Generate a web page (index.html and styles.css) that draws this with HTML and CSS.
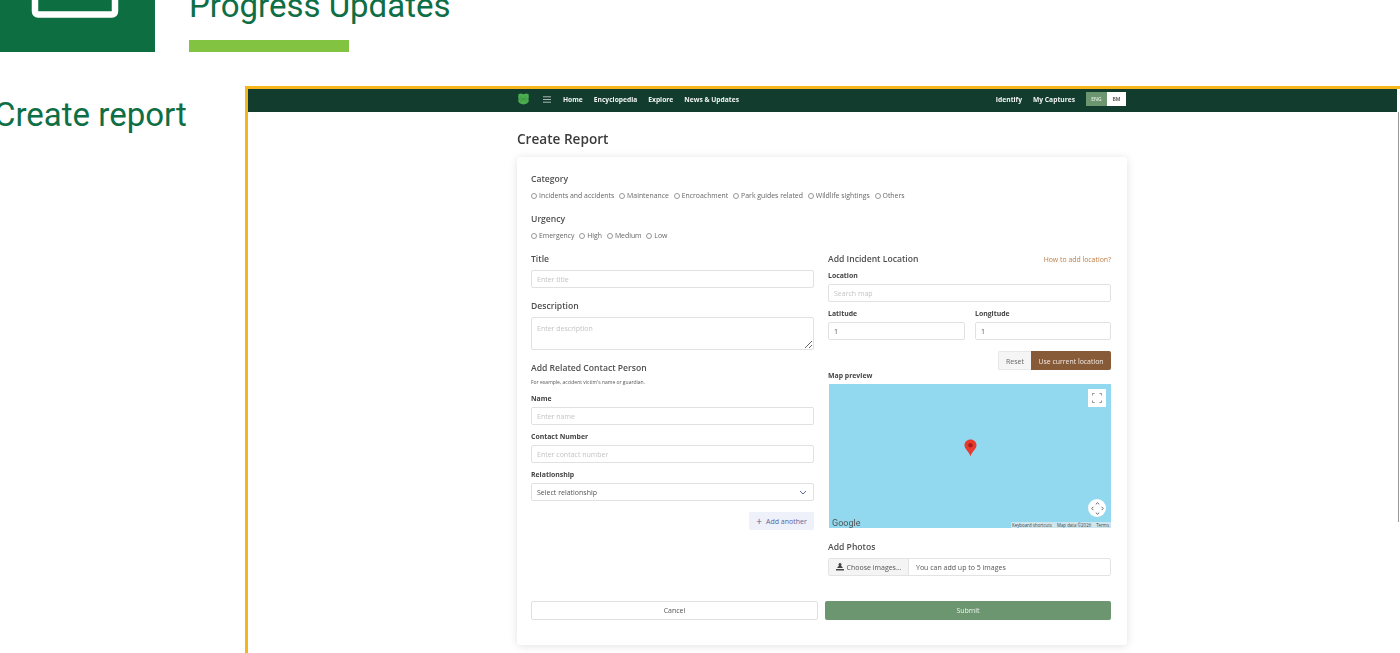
FILE: index.html
```html
<!DOCTYPE html>
<html lang="en">
<head>
<meta charset="utf-8">
<title>Progress Updates</title>
<link rel="stylesheet" href="styles.css">
</head>
<body>
<div class="slide">
  <header class="slide-head">
    <div class="slide-icon">
      <svg class="slide-icon-svg" width="155" height="52" viewBox="0 0 155 52"><rect x="35" y="-30" width="80" height="44.500" rx="3" fill="none" stroke="#fff" stroke-width="6.500"/></svg>
    </div>
    <div class="slide-title-block">
      <h1 class="slide-title">Progress Updates</h1>
      <div class="slide-bar"></div>
    </div>
  </header>
  <div class="slide-body">
    <h2 class="slide-sub">Create report</h2>
    <div class="frame">
      <div class="frame-scroll"></div>
      <div class="frame-inner">
      <nav class="nav">
        <div class="nav-inner">
          <div class="nav-left">
            <svg class="logo" width="11" height="12" viewBox="0 0 11 12"><path d="M.5 1 3 .5l2.500.8L8 .5l2.500.5.3 3-.3 2 .3 2.500L9 10.500l-3.500 1-3.500-1L.2 8.500.5 6 .2 4Z" fill="#4cae4f"/><path d="M2 3l6.500 6M8.500 2.500 2.500 9M1 6h9" stroke="#3a9444" stroke-width=".7"/></svg>
            <svg class="burger" width="8" height="7" viewBox="0 0 8 7"><path d="M0 .8h8M0 3.500h8M0 6.200h8" stroke="#cfd8d3" stroke-width=".8"/></svg>
            <a class="nav-link">Home</a><a class="nav-link">Encyclopedia</a><a class="nav-link">Explore</a><a class="nav-link">News &amp; Updates</a>
          </div>
          <div class="nav-right">
            <a class="nav-link">Identify</a><a class="nav-link">My Captures</a>
            <div class="lang"><span class="lang-on">ENG</span><span class="lang-off">BM</span></div>
          </div>
        </div>
      </nav>
      <main class="content">
        <h3 class="page-title">Create Report</h3>
        <form class="card">
          <div class="section-label">Category</div>
          <div class="radios">
            <label class="radio"><i class="dot"></i>Incidents and accidents</label>
            <label class="radio"><i class="dot"></i>Maintenance</label>
            <label class="radio"><i class="dot"></i>Encroachment</label>
            <label class="radio"><i class="dot"></i>Park guides related</label>
            <label class="radio"><i class="dot"></i>Wildlife sightings</label>
            <label class="radio"><i class="dot"></i>Others</label>
          </div>
          <div class="section-label mt12">Urgency</div>
          <div class="radios">
            <label class="radio"><i class="dot"></i>Emergency</label>
            <label class="radio"><i class="dot"></i>High</label>
            <label class="radio"><i class="dot"></i>Medium</label>
            <label class="radio"><i class="dot"></i>Low</label>
          </div>
          <div class="columns">
            <div class="col">
              <div class="section-label pt1 lb6">Title</div>
              <input class="field" placeholder="Enter title">
              <div class="section-label mt12 lb5">Description</div>
              <textarea class="field area" placeholder="Enter description"></textarea>
              <div class="section-label mt12">Add Related Contact Person</div>
              <div class="hint">For example, accident victim's name or guardian.</div>
              <div class="small-label mt7">Name</div>
              <input class="field" placeholder="Enter name">
              <div class="small-label mt6">Contact Number</div>
              <input class="field" placeholder="Enter contact number">
              <div class="small-label mt6">Relationship</div>
              <div class="field select">Select relationship
                <svg width="8" height="5" viewBox="0 0 8 5"><path d="M1 1l3 3 3-3" fill="none" stroke="#4a5590" stroke-width=".9"/></svg>
              </div>
              <div class="add-row">
                <button type="button" class="add-btn"><span class="plus">+</span>Add another</button>
              </div>
            </div>
            <div class="col">
              <div class="loc-head">
                <div class="section-label pt1">Add Incident Location</div>
                <a class="help">How to add location?</a>
              </div>
              <div class="small-label mt6">Location</div>
              <input class="field" placeholder="Search map">
              <div class="latlng">
                <div><div class="small-label">Latitude</div><input class="field" value="1"></div>
                <div><div class="small-label">Longitude</div><input class="field" value="1"></div>
              </div>
              <div class="loc-btns">
                <button type="button" class="btn-reset">Reset</button><button type="button" class="btn-use">Use current location</button>
              </div>
              <div class="small-label">Map preview</div>
              <div class="map">
                <div class="map-full"><svg width="10" height="10" viewBox="0 0 10 10"><path d="M.5 2.500v-2h2M7.500 .5h2v2M9.500 7.500v2h-2M2.500 9.500h-2v-2" fill="none" stroke="#777" stroke-width=".8"/></svg></div>
                <svg class="pin" width="13" height="18" viewBox="0 0 13 18"><path d="M6.500.5C3 .5.500 3 .500 6.200c0 4.300 4.700 6.200 6 11.300 1.300-5.100 6-7 6-11.300C12.500 3 10 .5 6.500.5Z" fill="#e8392f"/><circle cx="6.500" cy="6.200" r="2.200" fill="#a81c16"/></svg>
                <div class="map-move"><svg width="13" height="13" viewBox="0 0 13 13"><path d="M4.800 2.400 6.500.8l1.700 1.600M4.800 10.600l1.700 1.600 1.700-1.600M2.400 4.800.8 6.500l1.600 1.700M10.600 4.800l1.600 1.700-1.600 1.700" fill="none" stroke="#555" stroke-width=".9"/></svg></div>
                <span class="google">Google</span>
                <div class="attrib"><span>Keyboard shortcuts</span><span>Map data ©2026</span><span>Terms</span></div>
              </div>
              <div class="section-label mt13 lb5">Add Photos</div>
              <div class="file">
                <div class="file-btn"><svg width="8" height="8" viewBox="0 0 8 8"><path d="M4 0a1.500 1.500 0 0 1 1 2.600L7 5H1l2-2.400A1.500 1.500 0 0 1 4 0ZM0 6h8v1.500H0Z" fill="#444"/></svg>Choose images...</div>
                <div class="file-note">You can add up to 5 images</div>
              </div>
            </div>
          </div>
          <div class="actions">
            <button type="button" class="btn-cancel">Cancel</button>
            <button type="button" class="btn-submit">Submit</button>
          </div>
        </form>
      </main>
      </div>
    </div>
  </div>
</div>
</body>
</html>
```
FILE: styles.css
```css
* { box-sizing: border-box; }
html, body { margin: 0; padding: 0; height: 653px; overflow: hidden; background: #fff; }
body { font-family: "Open Sans", "Noto Sans", sans-serif; color: #444; }
.slide { width: 1400px; height: 653px; overflow: hidden; display: flex; flex-direction: column; }

.slide-head { display: flex; height: 52px; flex: none; }
.slide-icon { width: 155px; height: 52px; background: #0d6e42; }
.slide-icon-svg { display: block; }
.slide-title-block { margin-left: 34px; display: flex; flex-direction: column; justify-content: flex-end; width: 400px; }
.slide-title { margin: -20px 0 14px; font: 400 33px/40px Roboto, sans-serif; color: #0e6e45; white-space: nowrap; }
.slide-bar { width: 160px; height: 12px; flex: none; background: #82c341; }

.slide-body { display: flex; margin-top: 34px; flex: 1; min-height: 0; }
.slide-sub { margin: 9px 0 0 -6px; width: 251px; flex: none; font: 400 33px/40px Roboto, sans-serif; color: #0e6e45; white-space: nowrap; }
.frame { position: relative; flex: 1; height: 600px; padding-right: 3px; border-top: 3px solid #f7b51c; border-left: 3px solid #f7b51c; background: #fff; }
.frame-inner { filter: blur(.35px); }
.frame-scroll { position: absolute; right: 1px; top: 23px; width: 1px; height: 410px; background: #999; }

.nav { height: 23px; background: #123c2e; padding: 0 0 3px 269px; }
.nav-inner { width: 610px; height: 100%; display: flex; justify-content: space-between; align-items: center; }
.nav-left, .nav-right { display: flex; align-items: center; }
.logo { margin-left: 1px; }
.burger { margin: 0 12px 0 14px; }
.nav-link { font-size: 6.700px; font-weight: 700; color: #f2f5f3; margin-right: 11px; white-space: nowrap; }
.lang { display: flex; height: 14px; margin-right: 1px; font-size: 5px; font-weight: 600; }
.lang span { width: 19px; display: flex; align-items: center; justify-content: center; }
.lang .lang-on { width: 21px; background: #6b9670; color: #e6efe7; }
.lang-off { background: #fff; color: #444; }

.content { width: 610px; margin-left: 269px; }
.page-title { margin: 18px 0 9px; font-size: 13.600px; line-height: 18px; font-weight: 600; color: #3c3c3c; }
.card { background: #fff; height: 488px; padding: 16px 14px 0; border-radius: 3px; box-shadow: 0 1px 8px rgba(0,0,0,.12); }

.section-label { height: 12px; font-size: 8.600px; line-height: 12px; font-weight: 600; color: #4f4f4f; white-space: nowrap; }
.pt1 { padding-top: 1px; }
.small-label { height: 10px; padding-top: 1px; font-size: 6.900px; line-height: 10px; font-weight: 700; color: #444; margin-bottom: 4px; white-space: nowrap; }
.mt6 { margin-top: 6px; }
.mt7 { margin-top: 7px; }
.mt12 { margin-top: 12px; }
.mt13 { margin-top: 13px; }
.lb5 { margin-bottom: 5px; }
.lb6 { margin-bottom: 6px; }

.radios { display: flex; gap: 4.800px; margin-top: 6px; height: 10px; }
.radio { display: flex; align-items: center; gap: 2px; font-size: 6.900px; line-height: 10px; color: #666; white-space: nowrap; }
.dot { width: 6px; height: 6px; border: .7px solid #999; border-radius: 50%; }

.columns { display: grid; grid-template-columns: 283px 283px; column-gap: 14px; margin-top: 11px; height: 324px; }
.col { min-width: 0; }
.field { display: block; width: 100%; height: 18px; padding: 0 5px; border: 1px solid #dfe1e4; border-radius: 2px; background: #fff; font: 400 7px "Open Sans", sans-serif; color: #555; outline: none; }
.field::placeholder { color: #c4c4c4; opacity: 1; }
.area { height: 33px; padding-top: 6px; resize: vertical; }
.hint { font-size: 5px; line-height: 8px; margin-top: 4px; color: #555; white-space: nowrap; }
.select { display: flex; align-items: center; justify-content: space-between; padding-right: 6px; }
.add-row { display: flex; justify-content: flex-end; margin-top: 11px; }
.add-btn { height: 18px; width: 65px; padding: 0; border: 0; border-radius: 2px; background: #eef0fa; color: #5a659c; font: 400 7px "Open Sans", sans-serif; display: flex; align-items: center; justify-content: center; gap: 4px; white-space: nowrap; }
.plus { font-size: 10px; line-height: 10px; }

.loc-head { display: flex; justify-content: space-between; align-items: center; }
.help { padding-top: 2px; font-size: 6.900px; color: #bd7d45; white-space: nowrap; }
.latlng { display: grid; grid-template-columns: 137px 136px; column-gap: 10px; margin-top: 6px; }
.loc-btns { display: flex; justify-content: flex-end; margin-top: 11px; height: 19px; }
.btn-reset { width: 33px; padding: 1px 0 0; border: 1px solid #e8e8e8; border-right: 0; background: #f5f5f5; border-radius: 2px 0 0 2px; color: #666; font: 400 7px "Open Sans", sans-serif; }
.btn-use { width: 80px; padding: 1px 0 0; border: 0; background: #875a38; border-radius: 0 2px 2px 0; color: #f4ece6; font: 400 6.900px "Open Sans", sans-serif; white-space: nowrap; }
.map { position: relative; height: 144px; margin-left: 1px; background: #92d9ef; overflow: hidden; }
.map-full { position: absolute; top: 5px; right: 5px; width: 18px; height: 18px; background: #fff; display: flex; align-items: center; justify-content: center; }
.pin { position: absolute; left: 135px; top: 55px; }
.map-move { position: absolute; right: 5px; bottom: 11px; width: 18px; height: 18px; border-radius: 50%; background: #fff; display: flex; align-items: center; justify-content: center; }
.google { position: absolute; left: 3px; bottom: 0; font: 400 9px Roboto, sans-serif; color: #555; }
.attrib { position: absolute; right: 0; bottom: 0; height: 6px; display: flex; gap: 5px; padding: 0 2px 0 1px; background: #cfe6ee; font-size: 4.400px; line-height: 6px; color: #444; white-space: nowrap; }
.file { display: flex; height: 18px; border: 1px solid #e2e3e5; border-radius: 2px; font-size: 7px; }
.file-btn { width: 80px; background: #f4f4f4; border-right: 1px solid #e2e3e5; display: flex; align-items: center; justify-content: center; gap: 3px; color: #555; white-space: nowrap; }
.file-note { padding-left: 7px; line-height: 17px; color: #555; }

.actions { display: flex; gap: 7px; margin-top: 25px; height: 19px; }
.btn-cancel, .btn-submit { padding: 0; border-radius: 2px; font: 400 7px "Open Sans", sans-serif; }
.btn-cancel { width: 287px; border: 1px solid #e0e0e0; background: #fff; color: #555; }
.btn-submit { width: 286px; border: 0; background: #6b9670; color: #eef3ee; }
```
